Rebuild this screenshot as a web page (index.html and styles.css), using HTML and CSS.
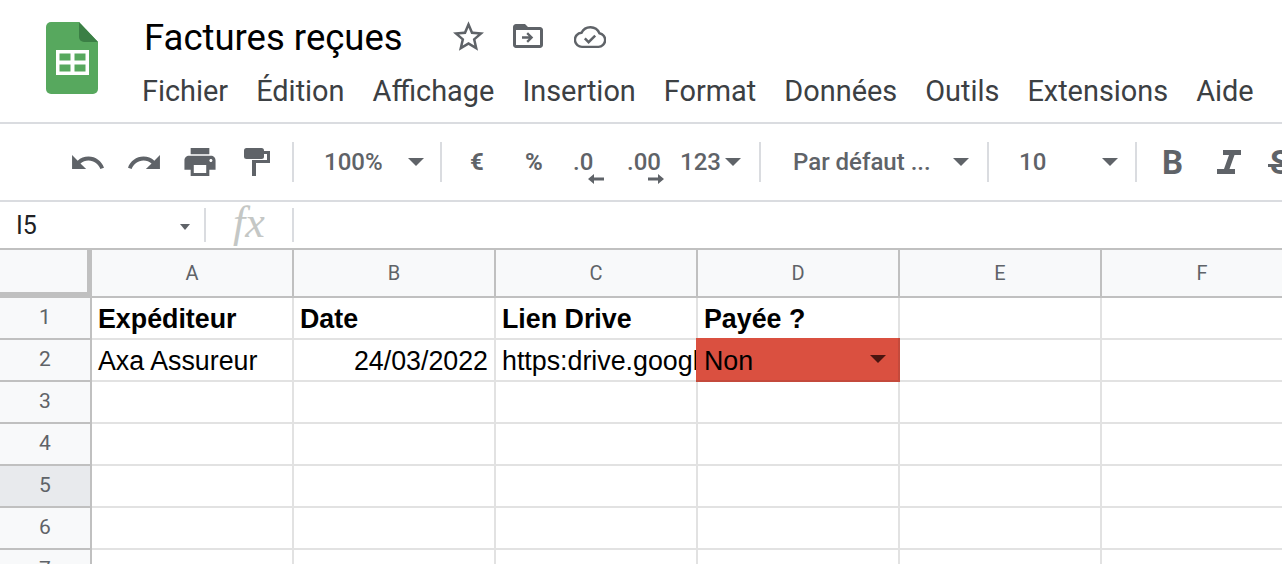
FILE: index.html
```html
<!DOCTYPE html>
<html lang="fr">
<head>
<meta charset="utf-8">
<title>Factures reçues</title>
<link rel="stylesheet" href="styles.css">
</head>
<body>
<header class="top">
  <svg class="logo" viewBox="0 0 52 72"><path d="M5 0H33L52 20V67a5 5 0 0 1-5 5H5a5 5 0 0 1-5-5V5a5 5 0 0 1 5-5z" fill="#57a85e"/><path d="M33 0L52 20H38a5 5 0 0 1-5-5z" fill="#3b7f45"/><path d="M10 28H43V53H10z" fill="#fff"/><path d="M13.500 31.500H24.500V38.500H13.500zM28.500 31.500H39.500V38.500H28.500zM13.500 42.500H24.500V49.500H13.500zM28.500 42.500H39.500V49.500H28.500z" fill="#57a85e"/></svg>
  <div class="top-main">
    <div class="title-row">
      <h1 class="doc-title">Factures reçues</h1>
      <svg class="ti star" viewBox="2 2 20 19"><path d="M22 9.240l-7.190-.62L12 2 9.190 8.630 2 9.240l5.460 4.730L5.820 21 12 17.270 18.180 21l-1.630-7.030L22 9.240zM12 15.400l-3.760 2.270 1-4.280-3.320-2.880 4.380-.38L12 6.100l1.710 4.040 4.380.38-3.320 2.880 1 4.280L12 15.400z" fill="#5f6368"/></svg>
      <svg class="ti folder" viewBox="2 4 20 16"><path d="M20 6h-8l-2-2H4c-1.100 0-1.990.9-1.990 2L2 18c0 1.100.9 2 2 2h16c1.100 0 2-.9 2-2V8c0-1.100-.9-2-2-2zm0 12H4V8h16v10z" fill="#5f6368"/><path d="M12 9.500l3.500 3.500-3.500 3.500-1.100-1.100 1.600-1.600H8v-1.600h4.500l-1.600-1.600z" fill="#5f6368"/></svg>
      <svg class="ti cloud" viewBox="0 0 34 26"><path d="M9 24a7.500 7.500 0 0 1-1-15A10.500 10.500 0 0 1 27 9.500 7.300 7.300 0 0 1 26 24z" fill="none" stroke="#5f6368" stroke-width="2.600"/><path d="M11.500 15l4 4 7-7" fill="none" stroke="#5f6368" stroke-width="2.600"/></svg>
    </div>
    <nav class="menu">
      <span>Fichier</span><span>Édition</span><span>Affichage</span><span>Insertion</span><span>Format</span><span>Données</span><span>Outils</span><span>Extensions</span><span>Aide</span>
    </nav>
  </div>
</header>

<div class="toolbar">
  <svg class="tool w-undo" viewBox="2 7 20.400 9.600"><path d="M12.500 8c-2.650 0-5.050.99-6.900 2.600L2 7v9h9l-3.620-3.620c1.390-1.160 3.160-1.880 5.120-1.880 3.540 0 6.550 2.310 7.600 5.500l2.370-.78C21.080 11.030 17.150 8 12.500 8z" fill="#5f6368"/></svg>
  <svg class="tool w-redo" viewBox="1.600 7 20.400 9.600"><path d="M18.400 10.600C16.550 8.990 14.150 8 11.500 8c-4.650 0-8.580 3.030-9.960 7.220L3.900 16c1.050-3.190 4.050-5.500 7.600-5.500 1.950 0 3.730.72 5.120 1.880L13 16h9V7l-3.600 3.600z" fill="#5f6368"/></svg>
  <svg class="tool w-print" viewBox="2 3 20 18"><path d="M19 8H5c-1.660 0-3 1.340-3 3v6h4v4h12v-4h4v-6c0-1.660-1.340-3-3-3zm-3 11H8v-5h8v5zm3-7c-.55 0-1-.45-1-1s.45-1 1-1 1 .45 1 1-.45 1-1 1zm-1-9H6v4h12V3z" fill="#5f6368"/></svg>
  <svg class="tool w-paint" viewBox="0 0 26 28"><rect x="0" y="0" width="20" height="11" rx="2.500" fill="#5f6368"/><path d="M20 3H26V15H12V28H8V12H23V6H20z" fill="#5f6368"/></svg>
  <i class="sep s1"></i>
  <span class="tt zoomv">100%</span><i class="caret c1"></i>
  <i class="sep s2"></i>
  <b class="tt euro">€</b>
  <b class="tt pct">%</b>
  <span class="deci d0">.0<svg viewBox="0 0 16 10"><path d="M16 3.500H6V0L0 5l6 5V6.500H16z" fill="#5f6368"/></svg></span>
  <span class="deci d00">.00<svg viewBox="0 0 16 10"><path d="M0 3.500H10V0l6 5-6 5V6.500H0z" fill="#5f6368"/></svg></span>
  <span class="tt n123">123</span><i class="caret c2"></i>
  <i class="sep s3"></i>
  <span class="tt font">Par défaut ...</span><i class="caret c3"></i>
  <i class="sep s4"></i>
  <span class="tt size">10</span><i class="caret c4"></i>
  <i class="sep s5"></i>
  <span class="fmt bold">B</span>
  <svg class="tool w-ital" viewBox="0 0 24 24"><path d="M6 0H24V5H17.500L12.500 19H18V24H0V19H7L12 5H6z" fill="#5f6368"/></svg>
  <span class="fmt strike">S</span>
</div>

<div class="formula">
  <div class="namebox"><span>I5</span><i class="caret small"></i></div>
  <i class="fsep"></i>
  <span class="fx">fx</span>
  <i class="fsep"></i>
</div>

<div class="sheet">
  <div class="corner"></div>
  <div class="ch">A</div><div class="ch">B</div><div class="ch">C</div><div class="ch">D</div><div class="ch">E</div><div class="ch">F</div>

  <div class="rh">1</div>
  <div class="c strong">Expéditeur</div><div class="c strong">Date</div><div class="c strong">Lien Drive</div><div class="c strong">Payée ?</div><div class="c"></div><div class="c"></div>

  <div class="rh">2</div>
  <div class="c">Axa Assureur</div><div class="c right">24/03/2022</div><div class="c clip">https:drive.google.com</div><div class="c status">Non<i class="caret dark"></i></div><div class="c"></div><div class="c"></div>

  <div class="rh">3</div><div class="c"></div><div class="c"></div><div class="c"></div><div class="c"></div><div class="c"></div><div class="c"></div>
  <div class="rh">4</div><div class="c"></div><div class="c"></div><div class="c"></div><div class="c"></div><div class="c"></div><div class="c"></div>
  <div class="rh active">5</div><div class="c"></div><div class="c"></div><div class="c"></div><div class="c"></div><div class="c"></div><div class="c"></div>
  <div class="rh">6</div><div class="c"></div><div class="c"></div><div class="c"></div><div class="c"></div><div class="c"></div><div class="c"></div>
  <div class="rh">7</div><div class="c"></div><div class="c"></div><div class="c"></div><div class="c"></div><div class="c"></div><div class="c"></div>
</div>
</body>
</html>
```

FILE: styles.css
```css
* { box-sizing: border-box; }
html, body { margin: 0; height: 564px; overflow: hidden; background: #fff; }
body { font-family: Roboto, sans-serif; color: #202124; width: 1282px; }

.top { display: flex; height: 124px; padding-left: 46px; border-bottom: 2px solid #dadce0; }
.logo { width: 52px; height: 72px; margin-top: 22px; flex: none; }
.top-main { margin-left: 44px; }
.title-row { display: flex; align-items: center; height: 72px; padding-top: 3px; }
.doc-title { margin: 0 0 0 2px; font-size: 36.500px; font-weight: 400; color: #000; line-height: 72px; width: 309px; white-space: nowrap; }
.ti { flex: none; display: block; }
.star { width: 31px; height: 30px; margin-top: -3px; }
.folder { width: 30px; height: 24px; margin: -4px 0 0 29px; }
.cloud { width: 32px; height: 25px; margin: -3px 0 0 31px; }
.menu { display: flex; gap: 28px; font-size: 28.900px; line-height: 36px; color: #3c4043; margin-top: 1px; }
.menu span { white-space: nowrap; }

.toolbar { display: flex; align-items: center; height: 78px; padding-left: 72px; border-bottom: 2px solid #dadce0; overflow: hidden; white-space: nowrap; color: #5f6368; position: relative; }
.tool { flex: none; display: block; }
.w-undo { width: 32px; height: 15px; }
.w-redo { width: 32px; height: 15px; margin-left: 24px; }
.w-print { width: 32px; height: 28px; margin-left: 24px; }
.w-paint { width: 26px; height: 28px; margin-left: 28px; }
.sep { flex: none; width: 2px; height: 40px; background: #dadce0; }
.s1 { margin-left: 22px; }
.tt { flex: none; font-size: 24px; color: #5f6368; font-weight: 500; }
.zoomv { margin-left: 30px; width: 84px; }
.caret { flex: none; display: block; width: 0; height: 0; border-left: 8px solid transparent; border-right: 8px solid transparent; border-top: 8px solid #5f6368; }
.s2 { margin-left: 16px; }
.euro { margin-left: 28px; width: 55px; font-weight: 700; }
.pct { width: 48px; font-weight: 700; }
.deci { flex: none; position: relative; font-size: 24px; font-weight: 500; }
.deci svg { position: absolute; top: 26px; width: 16px; height: 10px; }
.d0 { width: 54px; }
.d0 svg { left: 15px; }
.d00 { width: 53px; }
.d00 svg { left: 21px; }
.n123 { width: 45px; }
.s3 { margin-left: 18px; }
.font { margin-left: 32px; width: 160px; }
.s4 { margin-left: 18px; }
.size { margin-left: 30px; width: 83px; }
.s5 { margin-left: 17px; }
.fmt { flex: none; font-weight: 700; font-size: 33px; color: #5f6368; }
.bold { margin-left: 25px; }
.w-ital { width: 24px; height: 24px; margin-left: 34px; }
.strike { margin-left: 29px; position: relative; }
.strike::after { content: ""; position: absolute; left: -2px; width: 30px; top: 21px; height: 3px; background: #5f6368; }

.formula { display: flex; align-items: center; height: 46px; }
.namebox { display: flex; align-items: center; width: 204px; padding: 0 14px 0 16px; justify-content: space-between; font-size: 25px; color: #202124; }
.caret.small { border-width: 6px 5px 0; margin-top: 3px; }
.fsep { flex: none; width: 2px; height: 34px; background: #dadce0; }
.fx { font-family: "Liberation Serif", serif; font-style: italic; font-size: 44px; color: #c4c7c5; width: 86px; text-align: center; line-height: 46px; margin-top: -4px; }

.sheet { display: grid; grid-template-columns: 92px 202px 202px 202px 202px 202px 202px; grid-template-rows: 48px repeat(7, 42px); border-top: 2px solid #c0c0c0; width: 1282px; overflow: hidden; }
.corner { background: #f8f9fa; border-right: 6px solid #c0c0c0; border-bottom: 6px solid #c0c0c0; height: 48px; margin-right: -1px; }
.ch { background: #f8f9fa; border-right: 2px solid #c0c0c0; border-bottom: 2px solid #c0c0c0; display: flex; align-items: center; justify-content: center; font-size: 20px; color: #5f6368; }
.rh { background: #f8f9fa; border-right: 2px solid #c0c0c0; border-bottom: 2px solid #c0c0c0; display: flex; align-items: center; justify-content: center; font-size: 21px; color: #5f6368; padding-bottom: 2px; }
.rh.active { background: #e8eaed; }
.c { border-right: 2px solid #e2e2e2; border-bottom: 2px solid #e2e2e2; font-family: "Liberation Sans", sans-serif; font-size: 26.800px; line-height: 42px; padding: 0 6px; color: #000; white-space: nowrap; overflow: hidden; }
.strong { font-weight: 700; }
.right { text-align: right; }
.clip { padding-right: 0; border-right: 0; }
.status { display: flex; align-items: center; justify-content: space-between; background: #da5040; padding: 4px 12px 0 8px; margin: -2px 0 0 -2px; border-right: 2px solid #c44a3c; border-bottom: 2px solid #c44a3c; }
.caret.dark { border-top-color: #4a1510; margin-top: -4px; }
```
